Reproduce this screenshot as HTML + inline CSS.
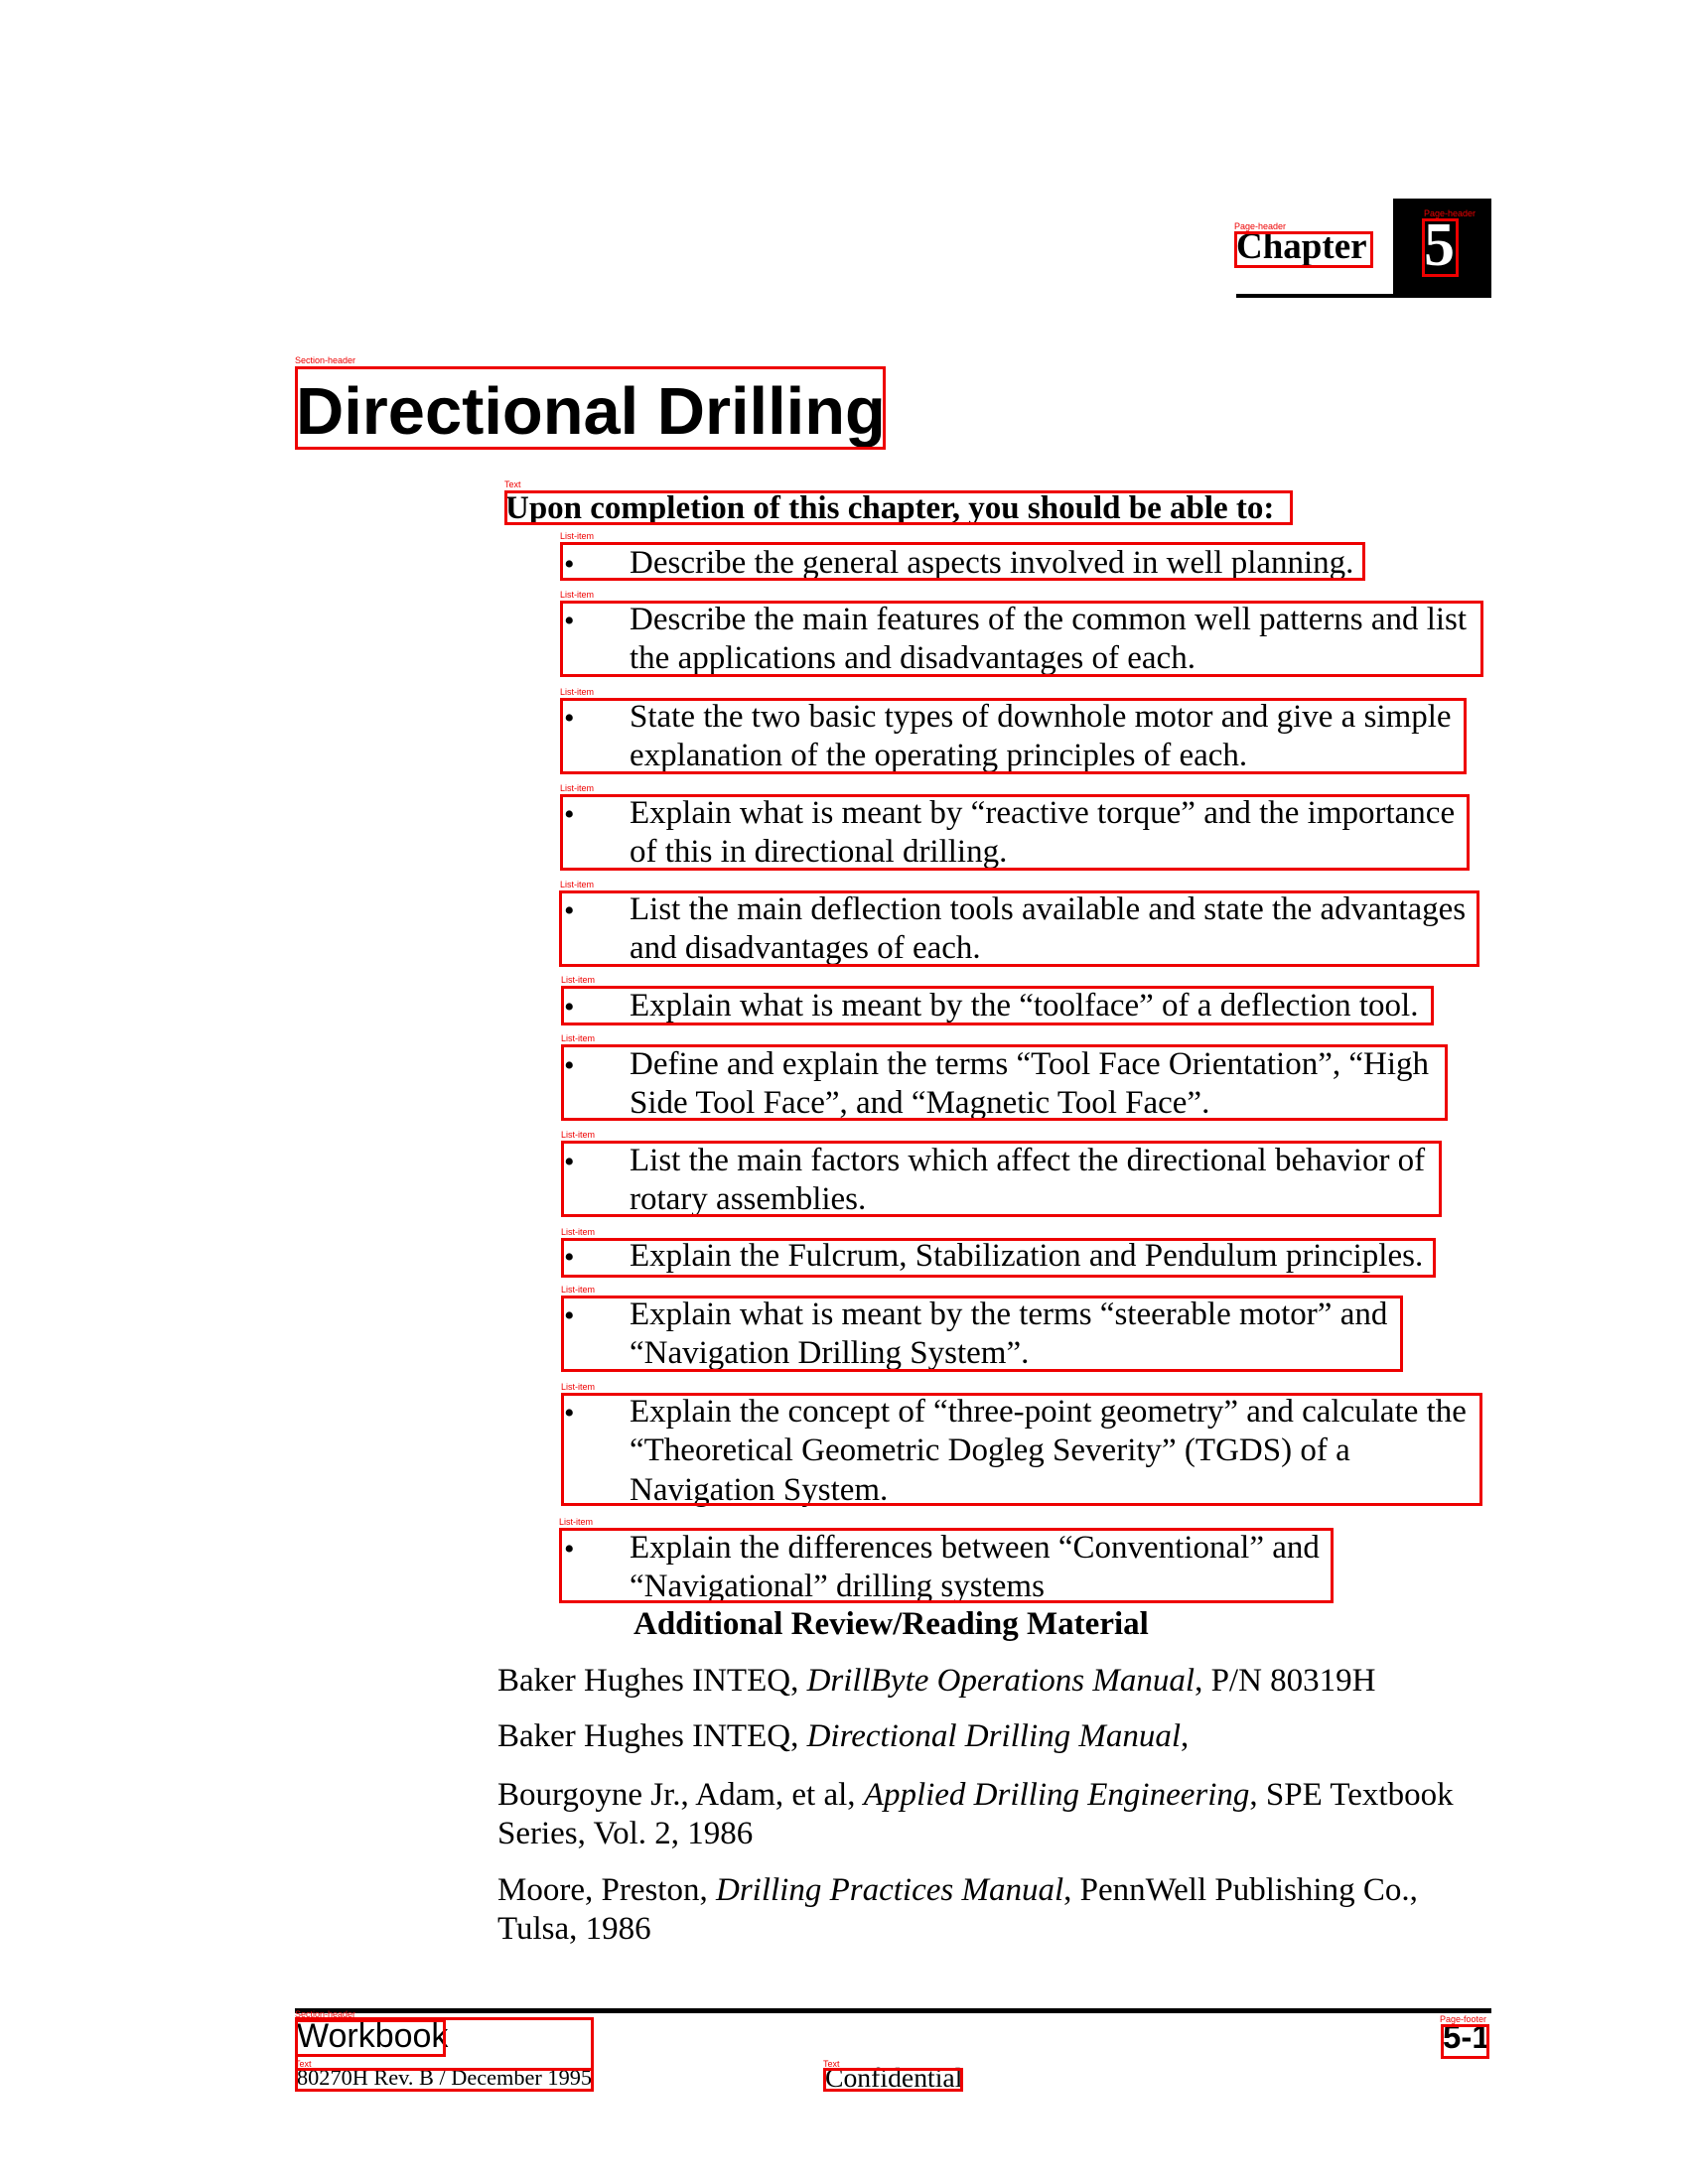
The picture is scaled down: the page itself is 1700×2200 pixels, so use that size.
<!DOCTYPE html>
<html><head><meta charset="utf-8"><style>
*{margin:0;padding:0;box-sizing:border-box}
body{width:1700px;height:2200px;background:#fff;position:relative;overflow:hidden;font-family:"Liberation Serif",serif;color:#000}
.a{position:absolute;white-space:nowrap}
.box{position:absolute;border:3px solid #e00}
.lb{position:absolute;font-family:"Liberation Sans",sans-serif;font-size:9px;color:#e00;line-height:9px;white-space:nowrap}
.li{position:absolute;left:634px;font-size:33px;line-height:39.3px;white-space:nowrap;margin-top:2px}
.bu{position:absolute;left:568px;font-size:30px;line-height:39.3px;margin-top:2px}
.ref{position:absolute;left:501px;font-size:33px;line-height:39px;white-space:nowrap;margin-top:2px}
</style></head><body>

<div style="position:absolute;left:1403px;top:200px;width:99px;height:99px;background:#000"></div>
<div style="position:absolute;left:1245px;top:296px;width:257px;height:4px;background:#000"></div>
<div class="a" style="left:1245px;top:230px;font-size:37px;line-height:37px;font-weight:bold">Chapter</div>
<div class="a" style="left:1434px;top:216px;font-size:62px;line-height:62px;font-weight:bold;color:#fff">5</div>
<div class="box" style="left:1243px;top:233px;width:140px;height:37px"></div>
<div class="lb" style="left:1243px;top:224px">Page-header</div>
<div class="box" style="left:1432px;top:220px;width:37px;height:59px"></div>
<div class="lb" style="left:1434px;top:211px">Page-header</div>

<div class="a" style="left:298px;top:382px;font-family:'Liberation Sans',sans-serif;font-weight:bold;font-size:66.8px;line-height:66.8px">Directional Drilling</div>
<div class="box" style="left:297px;top:369px;width:595px;height:84px"></div>
<div class="lb" style="left:297px;top:359px">Section-header</div>

<div class="a" style="left:509px;top:496px;font-size:33px;line-height:33px;font-weight:bold">Upon completion of this chapter, you should be able to:</div>
<div class="box" style="left:508px;top:494px;width:794px;height:35px"></div>
<div class="lb" style="left:508px;top:484px">Text</div>

<div class="bu" style="top:547px">•</div><div class="li" style="top:546px">Describe the general aspects involved in well planning.</div>
<div class="box" style="left:564px;top:546px;width:811px;height:39px"></div><div class="lb" style="left:564px;top:536px">List-item</div>

<div class="bu" style="top:604px">•</div><div class="li" style="top:603px">Describe the main features of the common well patterns and list<br>the applications and disadvantages of each.</div>
<div class="box" style="left:564px;top:605px;width:930px;height:77px"></div><div class="lb" style="left:564px;top:595px">List-item</div>

<div class="bu" style="top:702px">•</div><div class="li" style="top:701px">State the two basic types of downhole motor and give a simple<br>explanation of the operating principles of each.</div>
<div class="box" style="left:564px;top:703px;width:913px;height:77px"></div><div class="lb" style="left:564px;top:693px">List-item</div>

<div class="bu" style="top:799px">•</div><div class="li" style="top:798px">Explain what is meant by “reactive torque” and the importance<br>of this in directional drilling.</div>
<div class="box" style="left:564px;top:800px;width:916px;height:77px"></div><div class="lb" style="left:564px;top:790px">List-item</div>

<div class="bu" style="top:896px">•</div><div class="li" style="top:895px">List the main deflection tools available and state the advantages<br>and disadvantages of each.</div>
<div class="box" style="left:563px;top:897px;width:927px;height:77px"></div><div class="lb" style="left:564px;top:887px">List-item</div>

<div class="bu" style="top:993px">•</div><div class="li" style="top:992px">Explain what is meant by the “toolface” of a deflection tool.</div>
<div class="box" style="left:565px;top:993px;width:879px;height:40px"></div><div class="lb" style="left:565px;top:983px">List-item</div>

<div class="bu" style="top:1052px">•</div><div class="li" style="top:1051px">Define and explain the terms “Tool Face Orientation”, “High<br>Side Tool Face”, and “Magnetic Tool Face”.</div>
<div class="box" style="left:565px;top:1052px;width:893px;height:77px"></div><div class="lb" style="left:565px;top:1042px">List-item</div>

<div class="bu" style="top:1149px">•</div><div class="li" style="top:1148px">List the main factors which affect the directional behavior of<br>rotary assemblies.</div>
<div class="box" style="left:565px;top:1149px;width:887px;height:77px"></div><div class="lb" style="left:565px;top:1139px">List-item</div>

<div class="bu" style="top:1245px">•</div><div class="li" style="top:1244px">Explain the Fulcrum, Stabilization and Pendulum principles.</div>
<div class="box" style="left:565px;top:1247px;width:881px;height:40px"></div><div class="lb" style="left:565px;top:1237px">List-item</div>

<div class="bu" style="top:1304px">•</div><div class="li" style="top:1303px">Explain what is meant by the terms “steerable motor” and<br>“Navigation Drilling System”.</div>
<div class="box" style="left:565px;top:1305px;width:848px;height:77px"></div><div class="lb" style="left:565px;top:1295px">List-item</div>

<div class="bu" style="top:1402px">•</div><div class="li" style="top:1401px">Explain the concept of “three-point geometry” and calculate the<br>“Theoretical Geometric Dogleg Severity” (TGDS) of a<br>Navigation System.</div>
<div class="box" style="left:565px;top:1403px;width:928px;height:114px"></div><div class="lb" style="left:565px;top:1393px">List-item</div>

<div class="bu" style="top:1539px">•</div><div class="li" style="top:1538px">Explain the differences between “Conventional” and<br>“Navigational” drilling systems</div>
<div class="box" style="left:563px;top:1539px;width:780px;height:76px"></div><div class="lb" style="left:563px;top:1529px">List-item</div>

<div class="a" style="left:638px;top:1620px;font-size:33px;line-height:33px;font-weight:bold">Additional Review/Reading Material</div>

<div class="ref" style="top:1672px">Baker Hughes INTEQ, <i>DrillByte Operations Manual</i>, P/N 80319H</div>
<div class="ref" style="top:1728px">Baker Hughes INTEQ, <i>Directional Drilling Manual</i>,</div>
<div class="ref" style="top:1787px">Bourgoyne Jr., Adam, et al, <i>Applied Drilling Engineering</i>, SPE Textbook<br>Series, Vol. 2, 1986</div>
<div class="ref" style="top:1883px">Moore, Preston, <i>Drilling Practices Manual</i>, PennWell Publishing Co.,<br>Tulsa, 1986</div>

<div style="position:absolute;left:297px;top:2023px;width:1205px;height:5px;background:#000"></div>
<div class="a" style="left:299px;top:2034px;font-family:'Liberation Sans',sans-serif;font-size:34px;line-height:34px">Workbook</div>
<div class="box" style="left:297px;top:2032px;width:301px;height:54px"></div>
<div class="box" style="left:297px;top:2034px;width:152px;height:38px"></div>
<div class="lb" style="left:297px;top:2025px">Section-header</div>
<div class="a" style="left:1453px;top:2035px;font-family:'Liberation Sans',sans-serif;font-weight:bold;font-size:33px;line-height:33px">5-1</div>
<div class="box" style="left:1451px;top:2039px;width:49px;height:35px"></div>
<div class="lb" style="left:1450px;top:2030px">Page-footer</div>
<div class="a" style="left:299px;top:2082px;font-size:22.3px;line-height:22.3px">80270H Rev. B / December 1995</div>
<div class="box" style="left:297px;top:2083px;width:301px;height:24px"></div>
<div class="lb" style="left:297px;top:2075px">Text</div>
<div class="a" style="left:831px;top:2079px;font-size:27.7px;line-height:27.7px">Confidential</div>
<div class="box" style="left:829px;top:2083px;width:141px;height:24px"></div>
<div class="lb" style="left:829px;top:2075px">Text</div>
</body></html>
